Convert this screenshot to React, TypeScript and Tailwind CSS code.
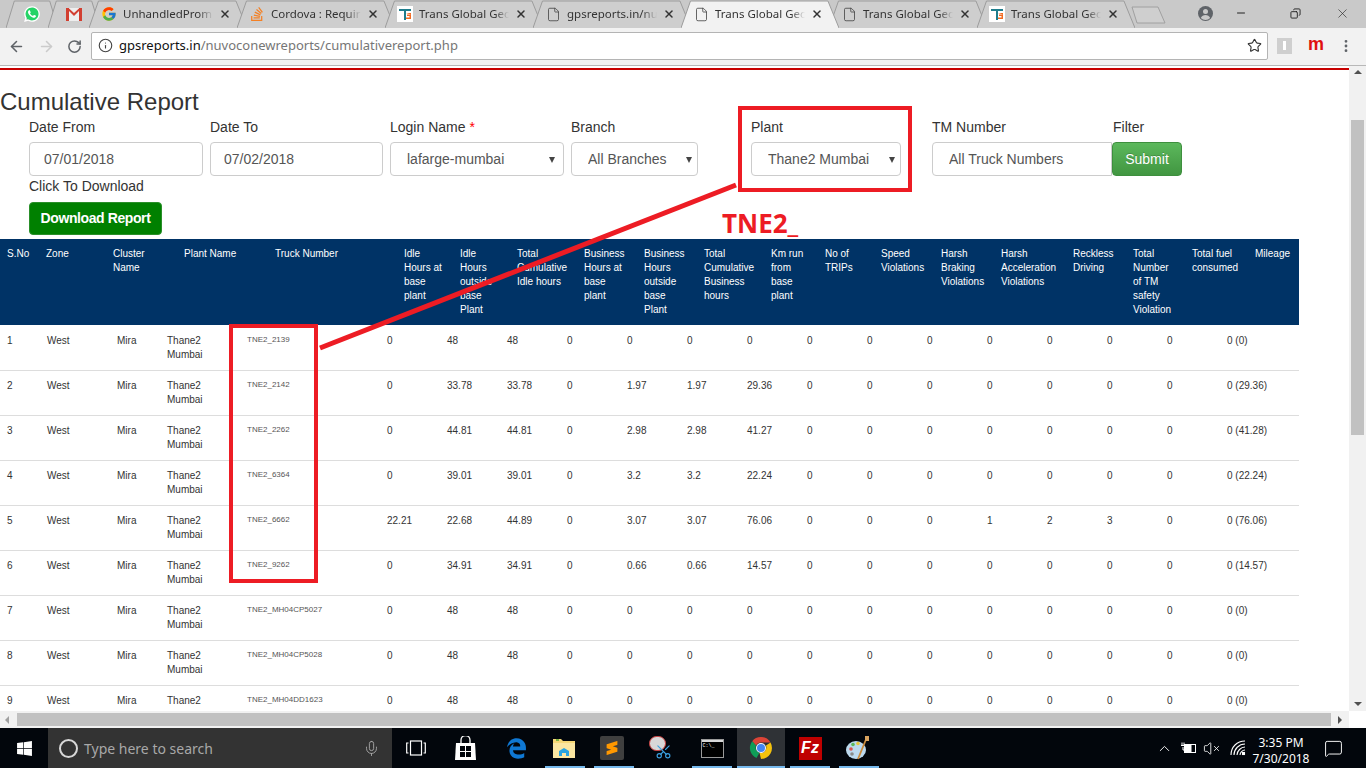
import React from 'react';
import { FaWhatsapp, FaWindows, FaStackOverflow, FaEdgeLegacy } from 'react-icons/fa';
import { FcGoogle } from 'react-icons/fc';
import { SiSublimetext } from 'react-icons/si';
import {
  ArrowLeft, ArrowRight, RotateCw, Info, Star, X, File, Minus, Copy, EllipsisVertical,
  Mic, ChevronUp, VolumeX, MessageSquare, Scissors,
} from 'lucide-react';

const headers = [
  { label: 'S.No', w: 'w-[40px] pl-[7px]' },
  { label: 'Zone', w: 'w-[67px] pl-[6px]' },
  { label: 'Cluster\nName', w: 'w-[71px] pl-[6px]' },
  { label: 'Plant Name', w: 'w-[91px] pl-[6px]' },
  { label: 'Truck Number', w: 'w-[129px] pl-[6px]' },
  { label: 'Idle\nHours at\nbase\nplant', w: 'w-[56px] pl-[6px]' },
  { label: 'Idle\nHours\noutside\nbase\nPlant', w: 'w-[57px] pl-[6px]' },
  { label: 'Total\nCumulative\nIdle hours', w: 'w-[67px] pl-[6px]' },
  { label: 'Business\nHours at\nbase\nplant', w: 'w-[60px] pl-[6px]' },
  { label: 'Business\nHours\noutside\nbase\nPlant', w: 'w-[60px] pl-[6px]' },
  { label: 'Total\nCumulative\nBusiness\nhours', w: 'w-[67px] pl-[6px]' },
  { label: 'Km run\nfrom\nbase\nplant', w: 'w-[54px] pl-[6px]' },
  { label: 'No of\nTRIPs', w: 'w-[56px] pl-[6px]' },
  { label: 'Speed\nViolations', w: 'w-[60px] pl-[6px]' },
  { label: 'Harsh\nBraking\nViolations', w: 'w-[60px] pl-[6px]' },
  { label: 'Harsh\nAcceleration\nViolations', w: 'w-[72px] pl-[6px]' },
  { label: 'Reckless\nDriving', w: 'w-[60px] pl-[6px]' },
  { label: 'Total\nNumber\nof TM\nsafety\nViolation', w: 'w-[59px] pl-[6px]' },
  { label: 'Total fuel\nconsumed', w: 'w-[63px] pl-[6px]' },
  { label: 'Mileage', w: 'w-[50px] pl-[6px]' },
];

const rows = [
  ['TNE2_2139', '0', '48', '48', '0', '0', '0', '0', '0', '0', '0', '0', '0', '0', '0', '0 (0)'],
  ['TNE2_2142', '0', '33.78', '33.78', '0', '1.97', '1.97', '29.36', '0', '0', '0', '0', '0', '0', '0', '0 (29.36)'],
  ['TNE2_2262', '0', '44.81', '44.81', '0', '2.98', '2.98', '41.27', '0', '0', '0', '0', '0', '0', '0', '0 (41.28)'],
  ['TNE2_6364', '0', '39.01', '39.01', '0', '3.2', '3.2', '22.24', '0', '0', '0', '0', '0', '0', '0', '0 (22.24)'],
  ['TNE2_6662', '22.21', '22.68', '44.89', '0', '3.07', '3.07', '76.06', '0', '0', '0', '1', '2', '3', '0', '0 (76.06)'],
  ['TNE2_9262', '0', '34.91', '34.91', '0', '0.66', '0.66', '14.57', '0', '0', '0', '0', '0', '0', '0', '0 (14.57)'],
  ['TNE2_MH04CP5027', '0', '48', '48', '0', '0', '0', '0', '0', '0', '0', '0', '0', '0', '0', '0 (0)'],
  ['TNE2_MH04CP5028', '0', '48', '48', '0', '0', '0', '0', '0', '0', '0', '0', '0', '0', '0', '0 (0)'],
  ['TNE2_MH04DD1623', '0', '48', '48', '0', '0', '0', '0', '0', '0', '0', '0', '0', '0', '0', '0 (0)'],
];

const TransLogo = () => (
  <svg width="16" height="16" viewBox="0 0 16 16" className="bg-white shrink-0">
    <path d="M2 3h12v2H9v9H7V5H2z" fill="#1e7d8c" />
    <path d="M9 7h5v6H9v-1.500h3.500V10H10V8.500h4" fill="#f26a21" />
  </svg>
);

const Tab = ({ title, icon, active, pinned, className }: { title?: string; icon: React.ReactNode; active?: boolean; pinned?: boolean; className: string }) => (
  <div className={`relative h-[28px] shrink-0 ${active ? 'z-10' : ''} ${className}`}>
    <svg className="absolute inset-0 w-full h-full" viewBox="0 0 100 28" preserveAspectRatio="none">
      <path
        d={pinned ? 'M0 28 L16 1 L84 1 L100 28' : 'M0 28 L6 1 L93 1 L100 28'}
        fill={active ? '#f2f2f2' : '#cecece'}
        stroke="#9c9c9c"
        strokeWidth="1"
        vectorEffect="non-scaling-stroke"
      />
    </svg>
    {pinned ? (
      <div className="relative h-full flex items-center justify-center">{icon}</div>
    ) : (
      <div className="relative h-full flex items-center pl-[11px]">
        <div className="w-[16px] h-[16px] ml-[1px] flex items-center justify-center shrink-0">{icon}</div>
        <span className="ml-[6px] w-[90px] whitespace-nowrap text-[11.5px] text-[#333] [mask-image:linear-gradient(to_right,black_84%,transparent)] font-['Noto_Sans',sans-serif]">
          {title}
        </span>
        <X size={12} strokeWidth={3} className="ml-[6px] text-[#333] shrink-0" />
      </div>
    )}
  </div>
);

const TabStrip = () => (
  <div className="h-[28px] bg-[#c9c9c9] flex items-center pl-[6px] relative shrink-0">
    <Tab pinned className="w-[52px]" icon={
      <span className="relative w-[16px] h-[16px] flex items-center justify-center">
        <span className="absolute inset-[1px] rounded-full bg-[#25d366]" />
        <FaWhatsapp size={18} className="relative text-white" />
      </span>
    } />
    <Tab pinned className="w-[52px] -ml-[10px]" icon={
      <svg width="16" height="13" viewBox="0 0 16 13">
        <rect width="16" height="13" fill="#eeeeee" />
        <path d="M0 0h3v13H0zM13 0h3v13h-3z" fill="#d23f31" />
        <path d="M0 0h2.500L8 5l5.500-5H16L8 8z" fill="#d23f31" />
      </svg>
    } />
    <Tab title="UnhandledPromi" className="w-[158px] -ml-[11px]" icon={<FcGoogle size={16} />} />
    <Tab title="Cordova : Requir" className="w-[158px] -ml-[10px]" icon={<FaStackOverflow size={16} className="text-[#f48024]" />} />
    <Tab title="Trans Global Geo" className="w-[158px] -ml-[10px]" icon={<TransLogo />} />
    <Tab title="gpsreports.in/nuv" className="w-[158px] -ml-[10px]" icon={<File size={15} strokeWidth={1.3} className="text-[#444]" />} />
    <Tab active title="Trans Global Geo" className="w-[158px] -ml-[10px]" icon={<File size={15} strokeWidth={1.3} className="text-[#444]" />} />
    <Tab title="Trans Global Geo" className="w-[158px] -ml-[10px]" icon={<File size={15} strokeWidth={1.3} className="text-[#444]" />} />
    <Tab title="Trans Global Geo" className="w-[158px] -ml-[10px]" icon={<TransLogo />} />
    <svg width="36" height="18" viewBox="0 0 36 18" className="-ml-[4px] mt-[1px] shrink-0">
      <path d="M1 1 L27 1 L34 17 L6 17 Z" fill="#cfcfcf" stroke="#a0a0a0" />
    </svg>
    <div className="ml-auto flex items-center h-full">
      <svg width="15" height="15" viewBox="0 0 15 15" className="mr-[22px] mb-[2px]">
        <circle cx="7.500" cy="7.500" r="7.500" fill="#5f6368" />
        <circle cx="7.500" cy="5.500" r="2.500" fill="#c9c9c9" />
        <path d="M2.800 12c.8-2 2.700-3 4.700-3s3.900 1 4.700 3a6.500 6.500 0 0 1-9.400 0z" fill="#c9c9c9" />
      </svg>
      <Minus size={12} className="text-[#222] mr-[43px] mb-[2px]" />
      <Copy size={11} className="text-[#222] -scale-x-100 mr-[34px] mb-[2px]" />
      <X size={15} strokeWidth={1} className="text-[#222] mr-[16px] mb-[2px]" />
    </div>
  </div>
);

const Toolbar = () => (
  <div className="h-[38px] bg-[#f2f2f2] border-b border-[#b8b8b8] flex items-center shrink-0 pl-[8px]">
    <ArrowLeft size={17} strokeWidth={2.2} className="text-[#5f6368]" />
    <ArrowRight size={17} strokeWidth={2.2} className="text-[#cbcbcb] ml-[13px]" />
    <RotateCw size={15} strokeWidth={2.4} className="text-[#5f6368] ml-[12px]" />
    <div className="ml-[9px] w-[1177px] h-[28px] -mt-[2px] bg-white border border-[#b4b4b4] rounded-[2px] flex items-center pl-[6px] pr-[5px]">
      <Info size={15} strokeWidth={1.8} className="text-[#444]" />
      <span className="ml-[6px] text-[13px] whitespace-nowrap font-['Noto_Sans',sans-serif] text-[#111]">
        gpsreports.in<span className="text-[#767676]">/nuvoconewreports/cumulativereport.php</span>
      </span>
      <Star size={15} strokeWidth={1.8} className="ml-auto text-[#333]" />
    </div>
    <div className="ml-[9px] w-[15px] h-[16px] -mt-[2px] bg-[#cfcfcf] flex items-center justify-center">
      <span className="w-[3px] h-[9px] bg-white" />
    </div>
    <span className="ml-[16px] -mt-[5px] text-[#e01010] text-[18px] leading-[20px] font-bold font-['Liberation_Sans',sans-serif]">m</span>
    <EllipsisVertical size={16} strokeWidth={2.2} className="ml-[14px] -mt-[2px] text-[#5f6368]" />
  </div>
);

const Field = ({ label, className, children }: { label: React.ReactNode; className: string; children?: React.ReactNode }) => (
  <div className={`shrink-0 ${className}`}>
    <label className="block h-[20px] mb-[5px] text-[14px] leading-[20px] text-[#333]">{label}</label>
    {children}
  </div>
);

const inputClass = 'w-full h-[34px] border border-[#ccc] rounded-[4px] bg-white text-[14px] text-[#555]';

const NativeSelect = ({ value, arrow = 'right-[6px]' }: { value: string; arrow?: string }) => (
  <div className="relative">
    <select className={`${inputClass} pl-4 pr-3 py-1.5 appearance-none`} defaultValue={value}>
      <option>{value}</option>
    </select>
    <span className={`absolute top-[15px] w-0 h-0 border-x-[3.5px] border-x-transparent border-t-[6px] border-t-[#444] ${arrow}`} />
  </div>
);

const FilterRow = () => (
  <div className="flex pl-[29px] mt-[2px]">
    <Field label="Date From" className="w-[174px] mr-[7px]">
      <input readOnly value="07/01/2018" className={`${inputClass} pl-[14px]`} />
    </Field>
    <Field label="Date To" className="w-[173px] mr-[7px]">
      <input readOnly value="07/02/2018" className={`${inputClass} pl-[13px]`} />
    </Field>
    <Field label={<>Login Name <span className="text-[#f00]">*</span></>} className="w-[174px] mr-[7px]">
      <NativeSelect value="lafarge-mumbai" arrow="right-[9px]" />
    </Field>
    <Field label="Branch" className="w-[127px] mr-[53px]">
      <NativeSelect value="All Branches" />
    </Field>
    <Field label="Plant" className="w-[150px] mr-[31px]">
      <NativeSelect value="Thane2 Mumbai" />
    </Field>
    <Field label="TM Number" className="w-[180px]">
      <input readOnly value="All Truck Numbers" className={`${inputClass} pl-[16px] rounded-r-none`} />
    </Field>
    <Field label={<span className="ml-[1px]">Filter</span>} className="w-[70px]">
      <button className="w-full h-[34px] rounded-[4px] border border-[#3e8f3e] bg-gradient-to-b from-[#5cb85c] to-[#419641] text-white text-[14px] [text-shadow:0_-1px_0_rgba(0,0,0,0.2)]">
        Submit
      </button>
    </Field>
  </div>
);

const ReportTable = () => (
  <div className="w-[1299px] mt-[4px]">
    <div className="flex h-[86px] mb-[1px] bg-[#003366] text-white text-[10px] leading-[14px] pt-[8px]">
      {headers.map((h) => (
        <div key={h.label} className={`${h.w} whitespace-pre-line shrink-0`}>{h.label}</div>
      ))}
    </div>
    {rows.map((r, i) => (
      <div key={r[0]} className="flex h-[45px] border-b border-[#ddd] text-[10px] leading-[14px] text-[#333] pt-[8px]">
        <div className="w-[40px] pl-[7px] shrink-0">{i + 1}</div>
        <div className="w-[70px] pl-[7px] shrink-0">West</div>
        <div className="w-[50px] pl-[7px] shrink-0">Mira</div>
        <div className="w-[80px] pl-[7px] shrink-0">Thane2{i < 8 && <><br />Mumbai</>}</div>
        <div className="w-[140px] pl-[7px] shrink-0 text-[8px] leading-[12px] text-[#555]">{r[0]}</div>
        {r.slice(1).map((v, j) => (
          <div key={j} className={`${j === 14 ? 'w-[79px]' : 'w-[60px]'} pl-[7px] shrink-0`}>{v}</div>
        ))}
      </div>
    ))}
  </div>
);

const Annotations = () => (
  <>
    <div className="absolute left-[738px] top-[106px] w-[174px] h-[86px] border-[4px] border-[#ed1c24]" />
    <div className="absolute left-[229px] top-[324px] w-[89px] h-[259px] border-[4px] border-[#ed1c24]" />
    <svg className="absolute left-0 top-0 pointer-events-none" width="1366" height="768">
      <line x1="320" y1="348" x2="736" y2="185" stroke="#ed1c24" strokeWidth="5" />
    </svg>
    <span className="absolute left-[722px] top-[207px] text-[26px] leading-[32px] font-bold text-[#ed1c24] font-['Open_Sans',sans-serif]">TNE2_</span>
  </>
);

const VScrollbar = () => (
  <div className="w-[17px] bg-[#f1f1f1] shrink-0 flex flex-col items-center">
    <span className="mt-[4px] w-0 h-0 border-x-[4px] border-x-transparent border-b-[4px] border-b-[#505050]" />
    <div className="mt-[46px] w-[13px] h-[315px] bg-[#c1c1c1]" />
    <span className="mt-auto mb-[5px] w-0 h-0 border-x-[4px] border-x-transparent border-t-[4px] border-t-[#505050]" />
  </div>
);

const HScrollbar = () => (
  <div className="h-[17px] flex shrink-0 bg-white">
    <div className="w-[1349px] bg-[#f1f1f1] flex items-center">
      <span className="ml-[5px] w-0 h-0 border-y-[4px] border-y-transparent border-r-[4px] border-r-[#a0a0a0]" />
      <div className="ml-[8px] w-[1314px] h-[13px] bg-[#c1c1c1]" />
      <span className="ml-[7px] w-0 h-0 border-y-[4px] border-y-transparent border-l-[4px] border-l-[#505050]" />
    </div>
  </div>
);

const ChromeIcon = () => (
  <svg width="24" height="24" viewBox="0 0 24 24">
    <path d="M12 1a11 11 0 0 1 9.500 5.500H12a5.500 5.500 0 0 0-5 3L3.200 5.200A11 11 0 0 1 12 1z" fill="#db4437" />
    <path d="M3.200 5.200 7 9.500a5.500 5.500 0 0 0 3.500 7.300L7.500 22A11 11 0 0 1 3.200 5.200z" fill="#0f9d58" />
    <path d="M21.500 6.500A11 11 0 0 1 12 23l-1.500-6.200A5.500 5.500 0 0 0 17 9.500z" fill="#f4c20d" />
    <circle cx="12" cy="12" r="5" fill="#fff" />
    <circle cx="12" cy="12" r="4" fill="#4285f4" />
  </svg>
);

const TaskItem = ({ children, running, className = '', active }: { children: React.ReactNode; running?: string; className?: string; active?: boolean }) => (
  <div className={`relative w-[48px] h-full flex items-center justify-center shrink-0 ${active ? 'bg-[#2f3236]' : ''} ${className}`}>
    {children}
    {running && <span className={`absolute bottom-0 h-[2px] bg-[#76b9ed] ${running}`} />}
  </div>
);

const Taskbar = () => (
  <div className="h-[40px] bg-[#02060c] flex items-center shrink-0">
    <div className="w-[48px] h-full flex items-center justify-center shrink-0">
      <FaWindows size={17} className="text-white" />
    </div>
    <div className="w-[344px] h-full bg-[#333] flex items-center shrink-0 pl-[11px] pr-[12px]">
      <span className="w-[19px] h-[19px] rounded-full border-[2px] border-[#d8d8d8]" />
      <span className="ml-[6px] text-[14px] text-[#a8a8a8] whitespace-nowrap font-['Noto_Sans',sans-serif]">Type here to search</span>
      <Mic size={17} strokeWidth={1.2} className="ml-auto text-[#b0b0b0]" />
    </div>
    <TaskItem>
      <svg width="20" height="16" viewBox="0 0 20 16" fill="none" stroke="#fff" strokeWidth="1.200">
        <rect x="4.500" y="1" width="11" height="14" />
        <path d="M2.500 3H.700v10h1.800M17.500 3h1.800v10h-1.800" />
      </svg>
    </TaskItem>
    <TaskItem className="ml-[1px]">
      <svg width="21" height="24" viewBox="0 0 21 24">
        <path d="M1 7h19l1 17H0z" fill="#fff" />
        <path d="M6 8V4a4 4 0 0 1 9 0v4" fill="none" stroke="#fff" strokeWidth="1.300" />
        <path d="M5 10h5v5H5zM11 10h5v5h-5zM5 16h5v5H5zM11 16h5v5h-5z" fill="#02060c" />
      </svg>
    </TaskItem>
    <TaskItem className="ml-[3px]">
      <FaEdgeLegacy size={21} className="text-[#0f78d4]" />
    </TaskItem>
    <TaskItem running="left-[5px] w-[40px]">
      <svg width="22" height="21" viewBox="0 0 22 21">
        <path d="M0 1h8l2 2h12v17H0z" fill="#f6d776" />
        <path d="M0 5h22v15H0z" fill="#fbe6a1" />
        <path d="M3 1h3v2H3z" fill="#7cb342" />
        <path d="M6 18v-5l5-3 5 3v5h-3v-3H9v3z" fill="#29a3e0" />
      </svg>
    </TaskItem>
    <TaskItem running="left-[6px] w-[40px]">
      <div className="w-[24px] h-[24px] rounded-[2px] bg-[#3f3f3f] flex items-center justify-center">
        <SiSublimetext size={14} className="text-[#ff9800]" />
      </div>
    </TaskItem>
    <TaskItem>
      <div className="relative w-[22px] h-[24px]">
        <span className="absolute left-0 top-0 w-[17px] h-[15px] rounded-full bg-[#d8d8d8] border border-[#d04040]" />
        <Scissors size={17} strokeWidth={1.6} className="absolute left-[6px] top-[7px] text-[#3aa0e0] -rotate-90" />
      </div>
    </TaskItem>
    <TaskItem className="ml-[4px]" running="left-[4px] w-[40px]">
      <div className="w-[23px] h-[19px] border border-[#9a9a9a] bg-black">
        <div className="h-[2px] bg-[#d8d8d8]" />
        <span className="block pl-[1px] text-[5px] leading-[8px] text-white font-['Liberation_Mono',monospace]">C:\_</span>
      </div>
    </TaskItem>
    <TaskItem active className="ml-[1px]" running="left-0 w-[48px]">
      <ChromeIcon />
    </TaskItem>
    <TaskItem className="ml-[1px]" running="left-[4px] w-[40px]">
      <div className="w-[23px] h-[23px] bg-[#bf0000] flex items-center justify-center">
        <span className="text-white text-[16px] leading-[16px] font-bold italic font-['Liberation_Sans',sans-serif]">Fz</span>
      </div>
    </TaskItem>
    <TaskItem running="left-[5px] w-[40px]">
      <svg width="24" height="26" viewBox="0 0 24 26">
        <ellipse cx="10" cy="15" rx="10" ry="9" fill="#bcd9ee" />
        <circle cx="5" cy="14" r="1.800" fill="#d9534f" />
        <circle cx="7" cy="9.500" r="1.800" fill="#5cb85c" />
        <circle cx="12" cy="8.500" r="1.800" fill="#e8c53a" />
        <circle cx="6" cy="19" r="1.800" fill="#8a8a8a" />
        <path d="M21 2 12 24" stroke="#c98a3c" strokeWidth="1.800" />
        <path d="M19 1h4v5h-4z" fill="#d9a35f" />
      </svg>
    </TaskItem>
    <div className="ml-auto flex items-center h-full text-white">
      <ChevronUp size={17} strokeWidth={1.3} />
      <svg width="16" height="12" viewBox="0 0 16 12" className="ml-[7px]" fill="none" stroke="#fff">
        <rect x="4.500" y="2.500" width="11" height="8" />
        <path d="M5 3h6v7H5z" fill="#fff" />
        <path d="M2 .500v3M4 .500v3M1 3.500h4M3 5v3h2" />
      </svg>
      <VolumeX size={17} strokeWidth={1.2} className="ml-[7px]" />
      <svg width="16" height="16" viewBox="0 0 16 16" className="ml-[10px]" fill="none" stroke="#fff" strokeWidth="1.100">
        <path d="M1 15C1 7 7 1 15 1M4 15C4 9 9 4 15 4M7 15c0-4 4-8 8-8M10 15c0-2.500 2.500-5 5-5" />
        <rect x="12.500" y="12.500" width="2" height="2" fill="#fff" />
      </svg>
      <div className="w-[70px] pt-[6px] text-center text-[12px] leading-[16px] font-['Noto_Sans',sans-serif]">
        3:35 PM<br />7/30/2018
      </div>
      <MessageSquare size={19} strokeWidth={1.2} className="ml-[8px] mr-[23px]" />
    </div>
  </div>
);

export default function App() {
  return (
    <div className="relative w-[1366px] h-[768px] overflow-hidden flex flex-col bg-white font-['Liberation_Sans',Arial,sans-serif]">
      <TabStrip />
      <Toolbar />
      <div className="flex-1 flex flex-col min-h-0">
        <div className="flex-1 flex min-h-0">
          <div className="flex-1 overflow-hidden pt-[2px]">
            <div className="h-[2px] bg-[#c80000]" />
            <h1 className="mt-[19px] text-[24px] leading-[26px] text-[#333]">Cumulative Report</h1>
            <FilterRow />
            <div className="pl-[29px] h-[20px] text-[14px] leading-[20px] text-[#333]">Click To Download</div>
            <div className="pl-[29px] mt-[6px]">
              <button className="w-[133px] h-[33px] rounded-[4px] bg-[#008000] border border-[#2a8f2a] text-white text-[14px] font-bold tracking-[-0.4px]">
                Download Report
              </button>
            </div>
            <ReportTable />
          </div>
          <VScrollbar />
        </div>
        <HScrollbar />
      </div>
      <Taskbar />
      <Annotations />
    </div>
  );
}
